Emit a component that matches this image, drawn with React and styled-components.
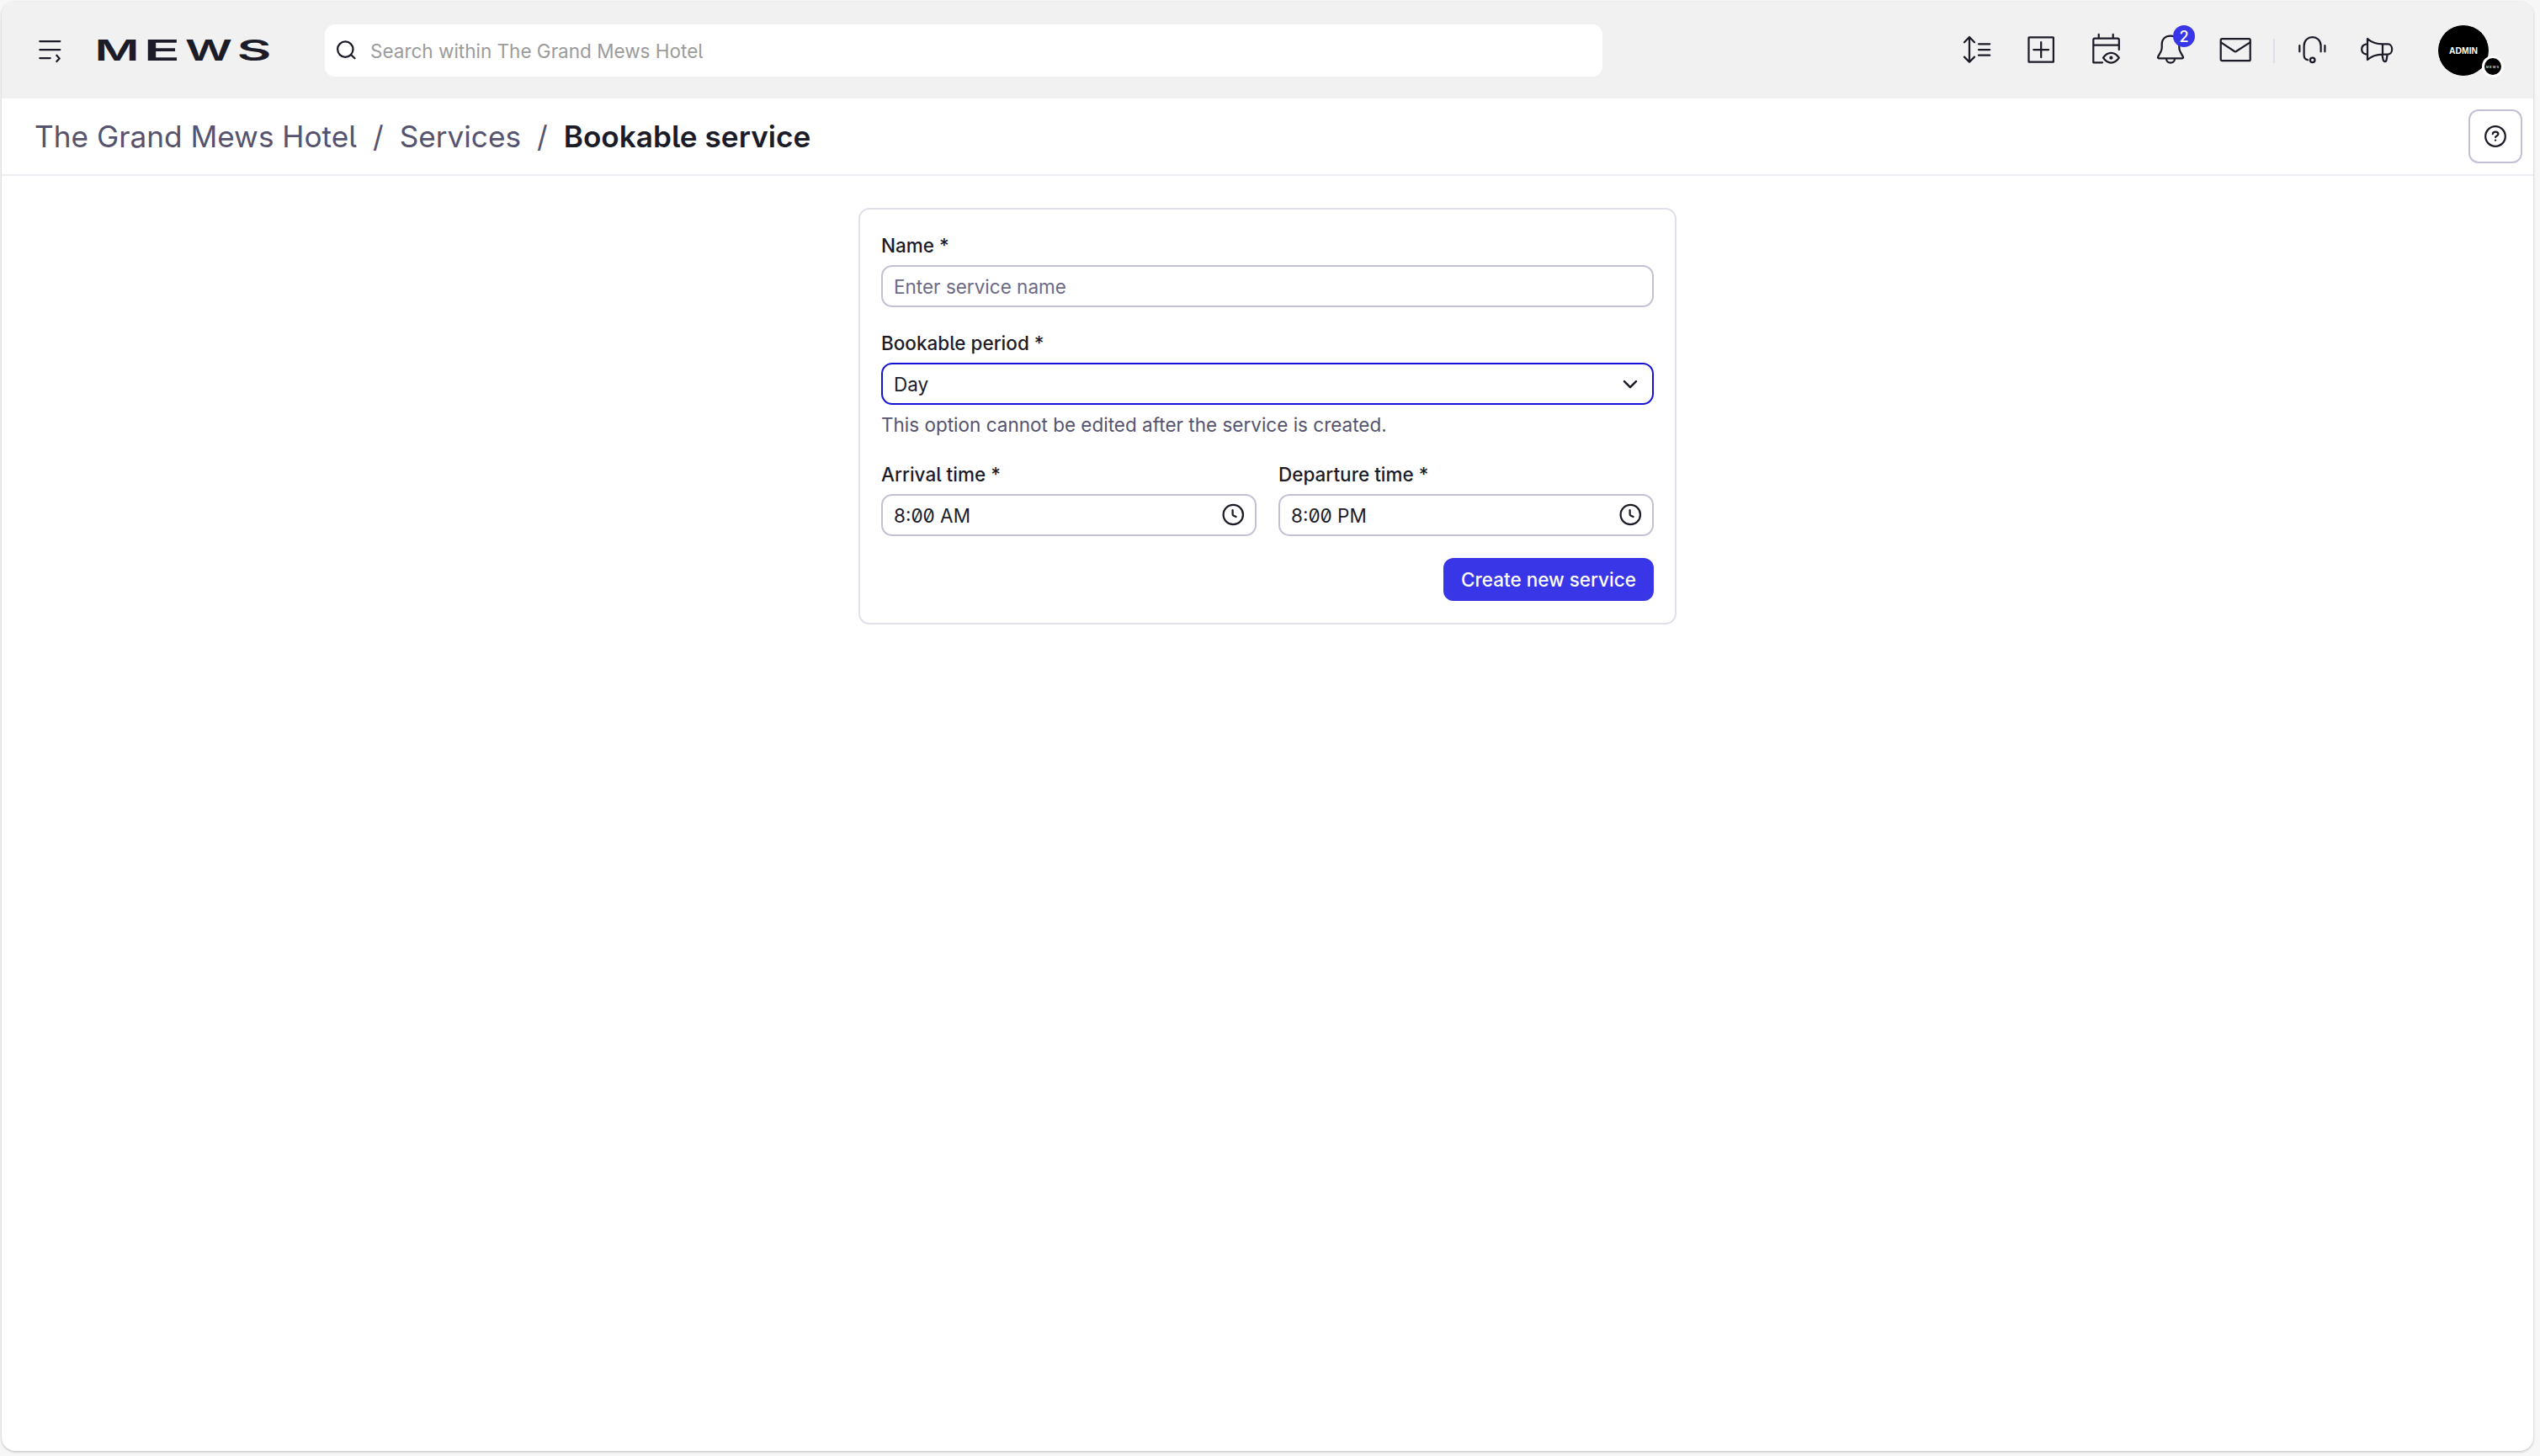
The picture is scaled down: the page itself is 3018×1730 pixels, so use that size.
import React from 'react';
import styled, { createGlobalStyle, css } from 'styled-components';

const ink = '#1c1b28';
const muted = '#55536e';
const line = '#c3c0d6';
const indigo = '#3936e8';

const GlobalStyle = createGlobalStyle`
  * {
    box-sizing: border-box;
  }
  body {
    margin: 0;
    background: #f7f7f7;
    color: ${ink};
    font-family: Inter, sans-serif;
    font-feature-settings: 'zero', 'cv05';
  }
`

const Center = css`
  display: flex;
  align-items: center;
  justify-content: center;
`

const Frame = styled.div`
  display: flex;
  flex-direction: column;
  width: 3008px;
  height: 1722px;
  margin: 2px 8px 6px 2px;
  background: #fff;
  border-radius: 16px;
  overflow: hidden;
  box-shadow: 0 1px 3px rgba(0, 0, 0, 0.25);
`

const HeaderStyle = styled.header`
  display: flex;
  align-items: center;
  height: 115px;
  padding: 1px 52px 0 44px;
  background: #f1f1f1;
`

const Icon = styled.svg`
  flex: none;
  display: block;
  overflow: visible;
  fill: none;
  stroke: ${ink};
  stroke-width: ${({ $stroke }) => $stroke || 2.25};
  stroke-linecap: round;
  stroke-linejoin: round;
`

const Logo = styled.svg`
  flex: none;
  overflow: visible;
  margin: 0 65px 0 43px;
  fill: ${ink};
  font-size: 34px;
  font-weight: 600;
`

const Search = styled.div`
  display: flex;
  align-items: center;
  gap: 16px;
  width: 1518px;
  height: 62px;
  padding: 0 14px;
  background: #fff;
  border-radius: 12px;
  font-size: 22.5px;
  color: #9b9b9b;
`

const Nav = styled.nav`
  display: flex;
  align-items: center;
  gap: 37px;
  margin-left: auto;
`

const NavItem = styled.div`
  position: relative;
`

const Counter = styled.span`
  ${Center};
  position: absolute;
  left: 23px;
  top: -10px;
  width: 26px;
  height: 26px;
  border-radius: 50%;
  background: ${indigo};
  color: #fff;
  font-size: 18px;
  font-weight: 500;
`

const Divider = styled.div`
  width: 2px;
  height: 29px;
  margin: 0 -12px;
  background: #dddce9;
`

const Avatar = styled.div`
  ${Center};
  position: relative;
  width: 62px;
  height: 62px;
  margin-left: 51px;
  border: 1px solid #fff;
  border-radius: 50%;
  background: #000;
  color: #fff;
  font: bold 10.4px 'Liberation Sans', sans-serif;
`

const AvatarBadge = styled.span`
  ${Center};
  position: absolute;
  left: 52px;
  top: 36px;
  width: 26px;
  height: 26px;
  border: 3px solid #fff;
  border-radius: 50%;
  background: #000;
  color: #ccc;
  font-size: 4px;
  letter-spacing: 1px;
`

const TitleBar = styled.div`
  display: flex;
  align-items: center;
  justify-content: space-between;
  height: 92px;
  padding: 0 13px 0 39px;
  border-bottom: 2px solid #ededf4;
`

const Breadcrumbs = styled.div`
  display: flex;
  gap: 19px;
  font-size: 35.2px;
  color: ${muted};
`

const Crumb = styled.span`
  ${({ $current }) => $current && css`
    color: ${ink};
    font-weight: 600;
  `}
`

const HelpButton = styled.button`
  ${Center};
  width: 64px;
  height: 64px;
  padding: 0;
  border: 2px solid ${line};
  border-radius: 12px;
  background: #fff;
`

const Card = styled.form`
  display: flex;
  flex-direction: column;
  gap: 25px;
  width: 972px;
  height: 495px;
  margin: 38px 0 0 1018px;
  padding: 25px;
  border: 2px solid #e0dfea;
  border-radius: 13px;
`

const Row = styled.div`
  display: flex;
  gap: 26px;
`

const Field = styled.div`
  ${Row} & {
    flex: 1;
  }
`

const Label = styled.div`
  height: 41px;
  line-height: 36px;
  font-size: 22.5px;
  font-weight: 500;
`

const Control = styled.div`
  display: flex;
  align-items: center;
  justify-content: space-between;
  height: 50px;
  padding: 0 13px;
  border: 2px solid ${({ $active }) => ($active ? '#1713d6' : line)};
  border-radius: 13px;
  font-size: 22.5px;
  color: ${({ $placeholder }) => ($placeholder ? '#6b6987' : ink)};
`

const Hint = styled.div`
  margin-top: 9px;
  padding-bottom: 1px;
  line-height: 30px;
  font-size: 22.5px;
  color: ${muted};
`

const Actions = styled.div`
  display: flex;
  justify-content: flex-end;
  padding-top: 1px;
`

const Button = styled.button`
  ${Center};
  width: 250px;
  height: 51px;
  padding: 0;
  border: 0;
  border-radius: 12px;
  background: ${indigo};
  color: #fff;
  font: 500 22.5px Inter, sans-serif;
`

const NavIcon = ({ children }) => (
  <Icon width="40" height="40" viewBox="0 1 40 40">{children}</Icon>
)

const ClockIcon = () => (
  <Icon width="26" height="26" viewBox="0 0.5 26 26">
    <circle cx="13.3" cy="13" r="11.7" />
    <path d="M12.6 7.6V12.8Q12.6 13.6 13.4 14L16.6 15.5" />
  </Icon>
)

const Header = () => {
  return (
    <HeaderStyle>
      <Icon width="28" height="30" viewBox="0 1 28 30">
        <path d="M1.3 5H25.3M1.3 15H25.3M1.3 25H13.7M21.3 21.8L24.7 25.4L21.3 29" />
      </Icon>
      <Logo width="204" height="25" viewBox="0 0.5 204 25">
        <text y="24.8">
          <tspan x="-4.5" textLength="53" lengthAdjust="spacingAndGlyphs">M</tspan>
          <tspan x="53.5" textLength="43.7" lengthAdjust="spacingAndGlyphs">E</tspan>
          <tspan x="103" textLength="56" lengthAdjust="spacingAndGlyphs">W</tspan>
          <tspan x="164.5" textLength="41" lengthAdjust="spacingAndGlyphs">S</tspan>
        </text>
      </Logo>
      <Search>
        <Icon width="24" height="24" viewBox="0 0 24 24">
          <circle cx="10.3" cy="10.6" r="9.2" />
          <path d="M17 17L21.5 21.3" />
        </Icon>
        <span>Search within The Grand Mews Hotel</span>
      </Search>
      <Nav>
        <NavIcon>
          <path d="M12 5.3V34.7M6 11.2L12 5L18 11.2M6 28.6L12 34.8L18 28.6M23 13.3H36.2M23 20H36.2M23 26.7H36.2" />
        </NavIcon>
        <NavIcon>
          <rect x="5.5" y="5.3" width="29.4" height="29.4" rx="0.5" />
          <path d="M20.2 11.2V29M11.3 20.1H29.1" />
        </NavIcon>
        <NavIcon>
          <path d="M11.7 1.8V6.5M28.7 1.8V6.5M16 35.3H5.3V8.5Q5.3 6.7 7 6.7H34Q35.8 6.7 35.8 8.5V20M5.3 14.7H35.8" />
          <path d="M17 29.7Q21 23.8 26.4 23.8T35.8 29.7Q31.8 35.6 26.4 35.6T17 29.7Z" />
          <circle cx="26.4" cy="29.7" r="1" />
        </NavIcon>
        <NavItem>
          <NavIcon>
            <path d="M6 30.3H34Q35.6 30 34.8 28.4L31.6 22.5Q30.3 20.3 30.3 17.5V13.5C30.3 7.5 26.2 3.6 20 3.6S9.7 7.5 9.7 13.5V17.5Q9.7 20.3 8.4 22.5L5.2 28.4Q4.4 30 6 30.3ZM15 31C15 37 25 37 25 31" />
          </NavIcon>
          <Counter>2</Counter>
        </NavItem>
        <NavIcon>
          <rect x="2.7" y="7.2" width="35" height="26" rx="1.5" />
          <path d="M2.9 11.4L18.6 21.8Q20 22.8 21.4 21.8L37.5 11.4" />
        </NavIcon>
        <Divider />
        <NavIcon>
          <path d="M4.3 15V22.3M34.4 15V22.3M29.6 22.3V15.4C29.6 1.8 9.6 1.8 9.6 15.4V26.5Q9.6 31.5 14 32.2" />
          <circle cx="19.7" cy="32.3" r="2.8" />
        </NavIcon>
        <NavIcon>
          <path d="M8 7V32M8 7Q15 13.4 26 13.4H32.2C38.8 13.4 38.8 25.5 32.2 25.5H26Q15 25.5 8 32M26 13.4V25.5M6 13.6C-0.4 15 -0.4 24 6 25.4M25.5 26L26.6 31.8Q27 34 28.9 34Q30.3 34 30.6 32L31.6 26" />
        </NavIcon>
      </Nav>
      <Avatar>
        ADMIN
        <AvatarBadge>MEWS</AvatarBadge>
      </Avatar>
    </HeaderStyle>
  )
}

const App = () => {
  return (
    <>
      <GlobalStyle />
      <Frame>
        <Header />
        <TitleBar>
          <Breadcrumbs>
            <Crumb>The Grand Mews Hotel</Crumb>
            <span>/</span>
            <Crumb>Services</Crumb>
            <span>/</span>
            <Crumb $current>Bookable service</Crumb>
          </Breadcrumbs>
          <HelpButton type="button">
            <Icon width="26" height="26" viewBox="0 0 26 26">
              <circle cx="13" cy="13" r="11.8" />
              <path d="M9.8 10.2C10 6.6 16.4 6.6 16.4 10.2C16.4 12.4 13.2 12.3 13 14M13 17.6V17.7" />
            </Icon>
          </HelpButton>
        </TitleBar>
        <Card>
          <Field>
            <Label>Name *</Label>
            <Control $placeholder>Enter service name</Control>
          </Field>
          <Field>
            <Label>Bookable period *</Label>
            <Control $active>
              Day
              <Icon width="26" height="26" viewBox="0 0 26 26" $stroke={2.5}>
                <path d="M6 10.2L13 17.2L20 10.2" />
              </Icon>
            </Control>
            <Hint>This option cannot be edited after the service is created.</Hint>
          </Field>
          <Row>
            <Field>
              <Label>Arrival time *</Label>
              <Control>8:00 AM<ClockIcon /></Control>
            </Field>
            <Field>
              <Label>Departure time *</Label>
              <Control>8:00 PM<ClockIcon /></Control>
            </Field>
          </Row>
          <Actions>
            <Button type="button">Create new service</Button>
          </Actions>
        </Card>
      </Frame>
    </>
  )
}

export default App;
